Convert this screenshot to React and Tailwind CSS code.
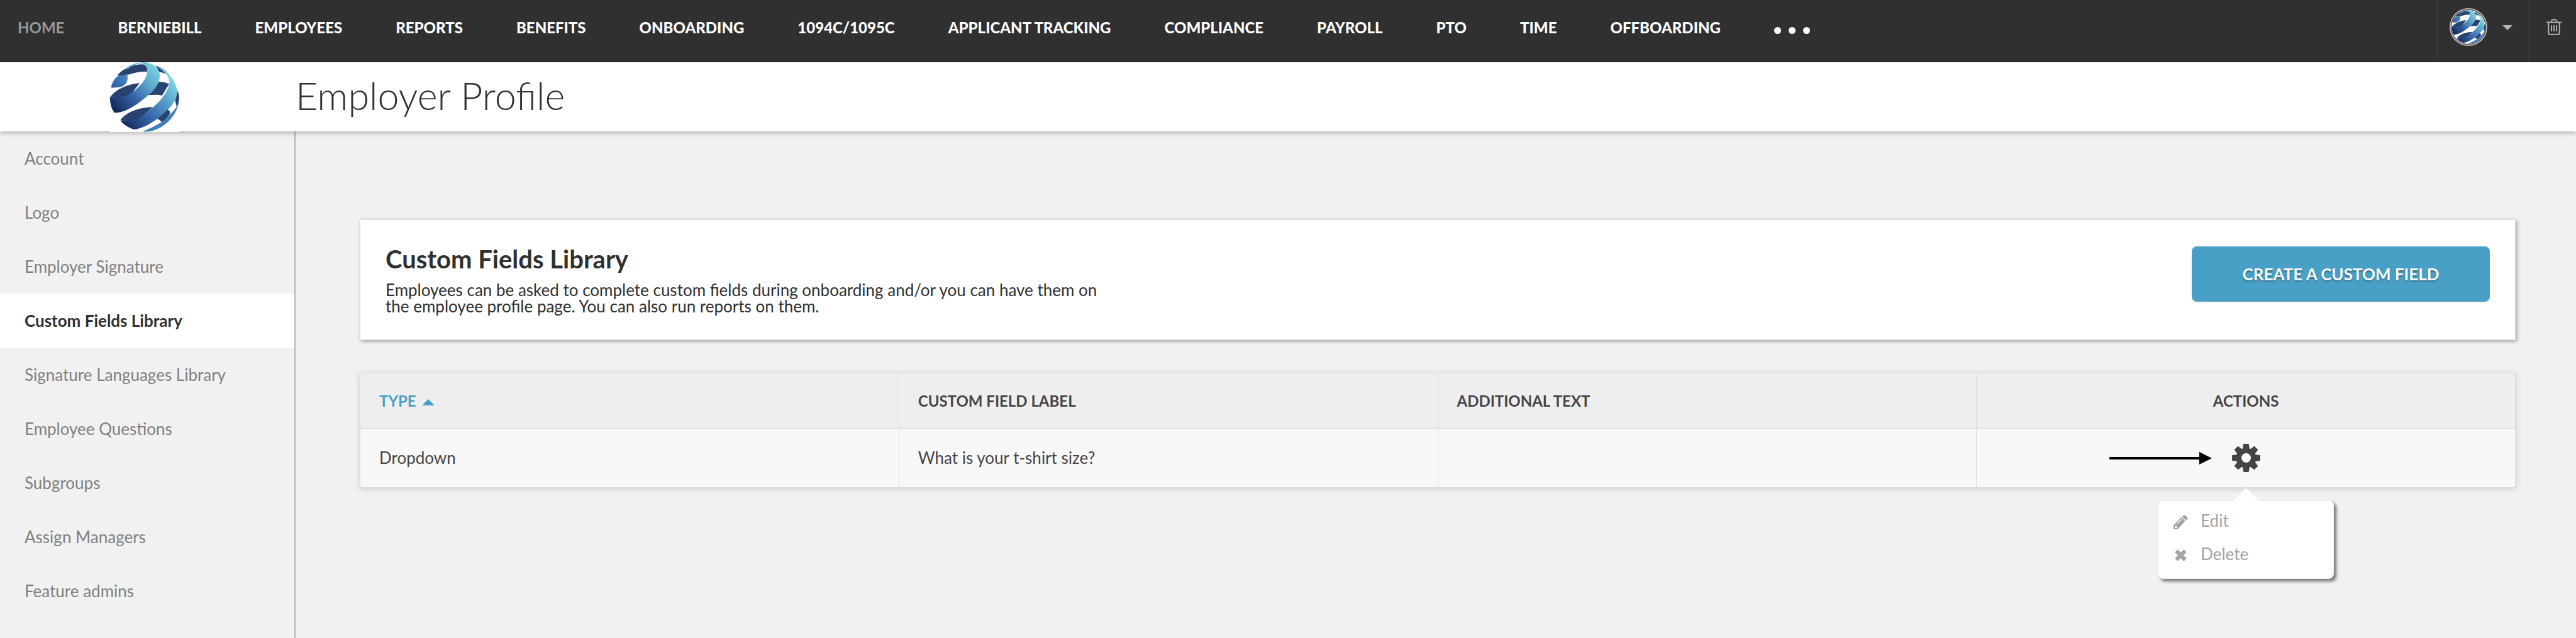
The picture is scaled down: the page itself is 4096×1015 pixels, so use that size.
const NAV = ['BERNIEBILL', 'EMPLOYEES', 'REPORTS', 'BENEFITS', 'ONBOARDING', '1094C/1095C', 'APPLICANT TRACKING', 'COMPLIANCE', 'PAYROLL', 'PTO', 'TIME', 'OFFBOARDING'];

const SIDEBAR = ['Account', 'Logo', 'Employer Signature', 'Custom Fields Library', 'Signature Languages Library', 'Employee Questions', 'Subgroups', 'Assign Managers', 'Feature admins'];

const GEAR_TEETH = [0, 45, 90, 135, 180, 225, 270, 315];

// Striped globe, drawn on a 138 x 138 grid
function GlobeLogo({ id, className }) {
  return (
    <svg viewBox="0 0 138 138" className={className} role="img" aria-label="Company logo">
      <defs>
        <linearGradient id={`${id}-a`} x1="8" y1="92" x2="96" y2="12" gradientUnits="userSpaceOnUse">
          <stop offset="0" stopColor="#13295c" />
          <stop offset="0.38" stopColor="#3563a9" />
          <stop offset="0.7" stopColor="#5aa6cd" />
          <stop offset="1" stopColor="#7cd4e2" />
        </linearGradient>
        <linearGradient id={`${id}-b`} x1="36" y1="132" x2="128" y2="40" gradientUnits="userSpaceOnUse">
          <stop offset="0" stopColor="#13295c" />
          <stop offset="0.35" stopColor="#3563a9" />
          <stop offset="0.7" stopColor="#559fca" />
          <stop offset="1" stopColor="#7cd4e2" />
        </linearGradient>
        <linearGradient id={`${id}-c`} x1="6" y1="48" x2="34" y2="24" gradientUnits="userSpaceOnUse">
          <stop offset="0" stopColor="#315da6" />
          <stop offset="1" stopColor="#4a8dc0" />
        </linearGradient>
      </defs>
      <rect width="138" height="138" fill="#fff" />
      {/* back side of the ribbons */}
      <path d="M16 25C28 12 46 4 66 4C74 6 76 13 74 19C52 17 38 28 18 27Z" fill="#28436f" />
      <path d="M92 7C104 10 113 18 119 26C113 24 105 20 98 19Z" fill="#28436f" />
      <path d="M2 68C14 52 36 44 60 41L44 62C30 72 12 74 2 68Z" fill="#28436f" />
      <path d="M92 39C102 38 112 40 118 43L104 66C96 63 86 65 76 65Z" fill="#28436f" />
      <path d="M134 56C140 66 138 80 133 88L130 77Z" fill="#28436f" />
      <path d="M22 114C34 98 60 89 86 89L66 106C50 119 34 122 22 114Z" fill="#28436f" />
      <path d="M114 93C120 96 121 100 119 103C113 112 109 115 104 119C100 114 97 113 94 112Z" fill="#28436f" />
      {/* front side */}
      <path d="M30 15C42 2 62-1 78 1C62 1 48 4 38 12Z" fill="#5aaed2" />
      <path d="M3 50C6 38 12 30 17 27C25 27 31 26 35 23C38 36 34 44 25 48C18 50 10 51 3 50Z" fill={`url(#${id}-c)`} />
      <path d="M60 1C76-1 92 4 98 17C103 32 95 48 84 59C62 78 36 100 10 100C4 92 1 82 1 68C18 76 38 66 52 54C66 42 78 26 74 10C72 5 66 2 60 1Z" fill={`url(#${id}-a)`} />
      <path d="M94 8C112 14 130 34 134 56C135 72 124 86 112 97C94 114 72 130 49 133C36 129 27 122 21 115C40 122 62 110 78 96C98 80 114 62 118 44C120 34 117 24 94 8Z" fill={`url(#${id}-b)`} />
      <path d="M137 78C136 96 118 124 92 133C84 137 74 138 66 137C86 128 106 120 119 104C128 96 134 88 137 78Z" fill="#3f7fbd" />
    </svg>
  );
}

function GearIcon({ className }) {
  return (
    <svg viewBox="0 0 48 48" className={className} fill="#444" aria-hidden="true">
      <circle cx="24" cy="24" r="17" />
      {GEAR_TEETH.map(angle => (
        <path key={angle} d="M17 10L18.500 7.500L19.300 1Q19.500 0 20.300 0H27.700Q28.500 0 28.700 1L29.500 7.500L31 10Z" transform={`rotate(${angle} 24 24)`} />
      ))}
      <circle cx="24" cy="24" r="8" fill="#fff" />
    </svg>
  );
}

function TrashIcon({ className }) {
  return (
    <svg viewBox="0 0 30 33" className={className} fill="none" stroke="#b5b5b5" strokeWidth="2.400" aria-hidden="true">
      <path d="M0 7H30M4 7V29Q4 31.500 6.500 31.500H23.500Q26 31.500 26 29V7M9 7L10.500 3Q11 1.500 12.500 1.500H17.500Q19 1.500 19.500 3L21 7M10 13V25.500M15 13V25.500M20 13V25.500" />
    </svg>
  );
}

function TopNav() {
  return (
    <nav className="flex h-[99px] bg-[#303030] text-[24px] leading-[30px] font-black text-white">
      <div className="flex h-[88px] flex-1 items-center gap-[85px] pl-[28px]">
        <a href="#home" className="font-bold text-[#999]">HOME</a>
        {NAV.map(item => (
          <a key={item} href="#nav" className="whitespace-nowrap">{item}</a>
        ))}
        <button type="button" aria-label="More" className="flex gap-3 pt-2">
          <span className="size-[11px] rounded-full bg-white" />
          <span className="size-[11px] rounded-full bg-white" />
          <span className="size-[11px] rounded-full bg-white" />
        </button>
      </div>
      <button type="button" aria-label="Account menu" className="flex w-[146px] items-start gap-6 border-l-2 border-[#383838] pt-[13px] pl-[19px]">
        <span className="size-[60px] rounded-full border-2 border-[#b5b5b5] p-px">
          <GlobeLogo id="avatar" className="size-full rounded-full" />
        </span>
        <svg viewBox="0 0 16 8" className="mt-[27px] h-2 w-4" fill="#b5b5b5" aria-hidden="true">
          <path d="M0 0H16L8 8Z" />
        </svg>
      </button>
      <button type="button" aria-label="Trash" className="flex w-[76px] items-start border-l-2 border-[#383838] pt-[30px] pl-[27px]">
        <TrashIcon className="h-[26px] w-6" />
      </button>
    </nav>
  );
}

function ActionsMenu() {
  return (
    <div className="absolute top-full left-1/2 z-10 mt-[21px] w-[280px] -translate-x-1/2 rounded-lg border border-[#eee] bg-white pt-[5px] pb-3 text-[26px] text-[#a3a3a3] shadow-[4px_4px_5px_rgba(0,0,0,0.5)]">
      <svg viewBox="0 0 42 22" className="absolute -top-[21px] left-1/2 h-[22px] w-[42px] -translate-x-1/2" fill="#fff" aria-hidden="true">
        <path d="M0 22L21 0L42 22Z" />
      </svg>
      <button type="button" className="flex h-[53px] w-full items-center gap-5 pl-6">
        <svg viewBox="0 0 28 28" className="mt-1 size-[23px]" fill="#a3a3a3" aria-hidden="true">
          <path fillRule="evenodd" d="M0 28V20L15.500 4.500L22.800 12L8 28ZM5.200 18L6.200 19L16.200 9L15.200 8ZM2.500 21.500V24.500L4 26L8 24.500L6.500 22.500L4.500 21Z" />
          <path d="M16.800 3.500L19.500 .8Q21 -.5 22.500 1L26.800 5.200Q28.200 6.800 26.800 8.200L24 11Z" />
        </svg>
        Edit
      </button>
      <button type="button" className="flex h-[53px] w-full items-center gap-5 pl-6">
        <svg viewBox="0 0 24 24" className="mt-1 size-[23px]" fill="#a3a3a3" aria-hidden="true">
          <rect x="1.500" y="8.700" width="21" height="6.600" rx="1.800" transform="rotate(45 12 12)" />
          <rect x="1.500" y="8.700" width="21" height="6.600" rx="1.800" transform="rotate(-45 12 12)" />
        </svg>
        Delete
      </button>
    </div>
  );
}

export default function App() {
  return (
    <div className="min-h-screen flex flex-col bg-[#f1f1f1] font-['Lato',sans-serif] text-[#303030]">
      <TopNav />
      <header className="relative flex h-[110px] items-center bg-white shadow-[0_2px_8px_rgba(0,0,0,0.3)]">
        <div className="w-[470px] shrink-0 pl-[174px]">
          <GlobeLogo id="header" className="size-[111px]" />
        </div>
        <h1 className="pb-1 text-[61px] leading-[70px] font-light">Employer Profile</h1>
      </header>

      <div className="flex flex-1">
        <aside className="w-[470px] shrink-0 border-r-2 border-[#b5b5b5]">
          {SIDEBAR.map(item => (
            <a
              key={item}
              href="#section"
              className={item === 'Custom Fields Library'
                ? 'flex h-[86px] items-center bg-white pl-[39px] text-[26px] font-bold text-[#303030]'
                : 'flex h-[86px] items-center pl-[39px] text-[26px] text-[#808080]'}
            >
              {item}
            </a>
          ))}
        </aside>

        <main className="flex-1 pt-[140px] pr-24 pl-[102px]">
          <section className="flex items-start justify-between border border-[#e0e0e0] bg-white px-10 pt-[42px] pb-10 shadow-[2px_2px_6px_rgba(0,0,0,0.35)]">
            <div>
              <h2 className="text-[40px] leading-[40px] font-bold">Custom Fields Library</h2>
              <p className="mt-4 max-w-[1150px] text-[26px] leading-[26px]">
                Employees can be asked to complete custom fields during onboarding and/or you can have them on the employee profile page. You can also run reports on them.
              </p>
            </div>
            <button type="button" className="h-[88px] w-[474px] rounded-lg bg-[#48a0c6] text-[26px] font-bold text-white [text-shadow:0_2px_2px_rgba(0,0,0,0.35)]">
              CREATE A CUSTOM FIELD
            </button>
          </section>

          <table className="mt-[52px] w-full table-fixed border-collapse border border-[#dcdcdc] text-left text-[#444] shadow-[0_2px_10px_rgba(0,0,0,0.15)]">
            <thead>
              <tr className="h-[88px] bg-[#eee] text-[24px]">
                <th className="border border-[#dcdcdc] px-[30px] font-bold text-[#48a0c6]">
                  <button type="button" className="flex items-center gap-2.5">
                    TYPE
                    <svg viewBox="0 0 18 10" className="mt-1 h-[10px] w-[18px]" fill="#48a0c6" aria-hidden="true">
                      <path d="M9 0L18 9Q18 10 17 10H1Q0 10 0 9Z" />
                    </svg>
                  </button>
                </th>
                <th className="border border-[#dcdcdc] px-[30px] font-bold">CUSTOM FIELD LABEL</th>
                <th className="border border-[#dcdcdc] px-[30px] font-bold">ADDITIONAL TEXT</th>
                <th className="border border-[#dcdcdc] px-[30px] text-center font-bold">ACTIONS</th>
              </tr>
            </thead>
            <tbody>
              <tr className="h-[94px] bg-[#f8f8f8] text-[26px]">
                <td className="border border-[#dcdcdc] px-[30px]">Dropdown</td>
                <td className="border border-[#dcdcdc] px-[30px]">What is your t-shirt size?</td>
                <td className="border border-[#dcdcdc] px-[30px]" />
                <td className="relative border border-[#dcdcdc]">
                  <div className="flex items-center justify-center gap-8">
                    <svg viewBox="0 0 163 20" className="h-5 w-[163px]" aria-hidden="true">
                      <path d="M0 8H143V0L163 10L143 20V12H0Z" />
                    </svg>
                    <button type="button" aria-label="Actions" className="mr-[195px]">
                      <GearIcon className="size-[45px]" />
                    </button>
                  </div>
                  <ActionsMenu />
                </td>
              </tr>
            </tbody>
          </table>
        </main>
      </div>
    </div>
  );
}
